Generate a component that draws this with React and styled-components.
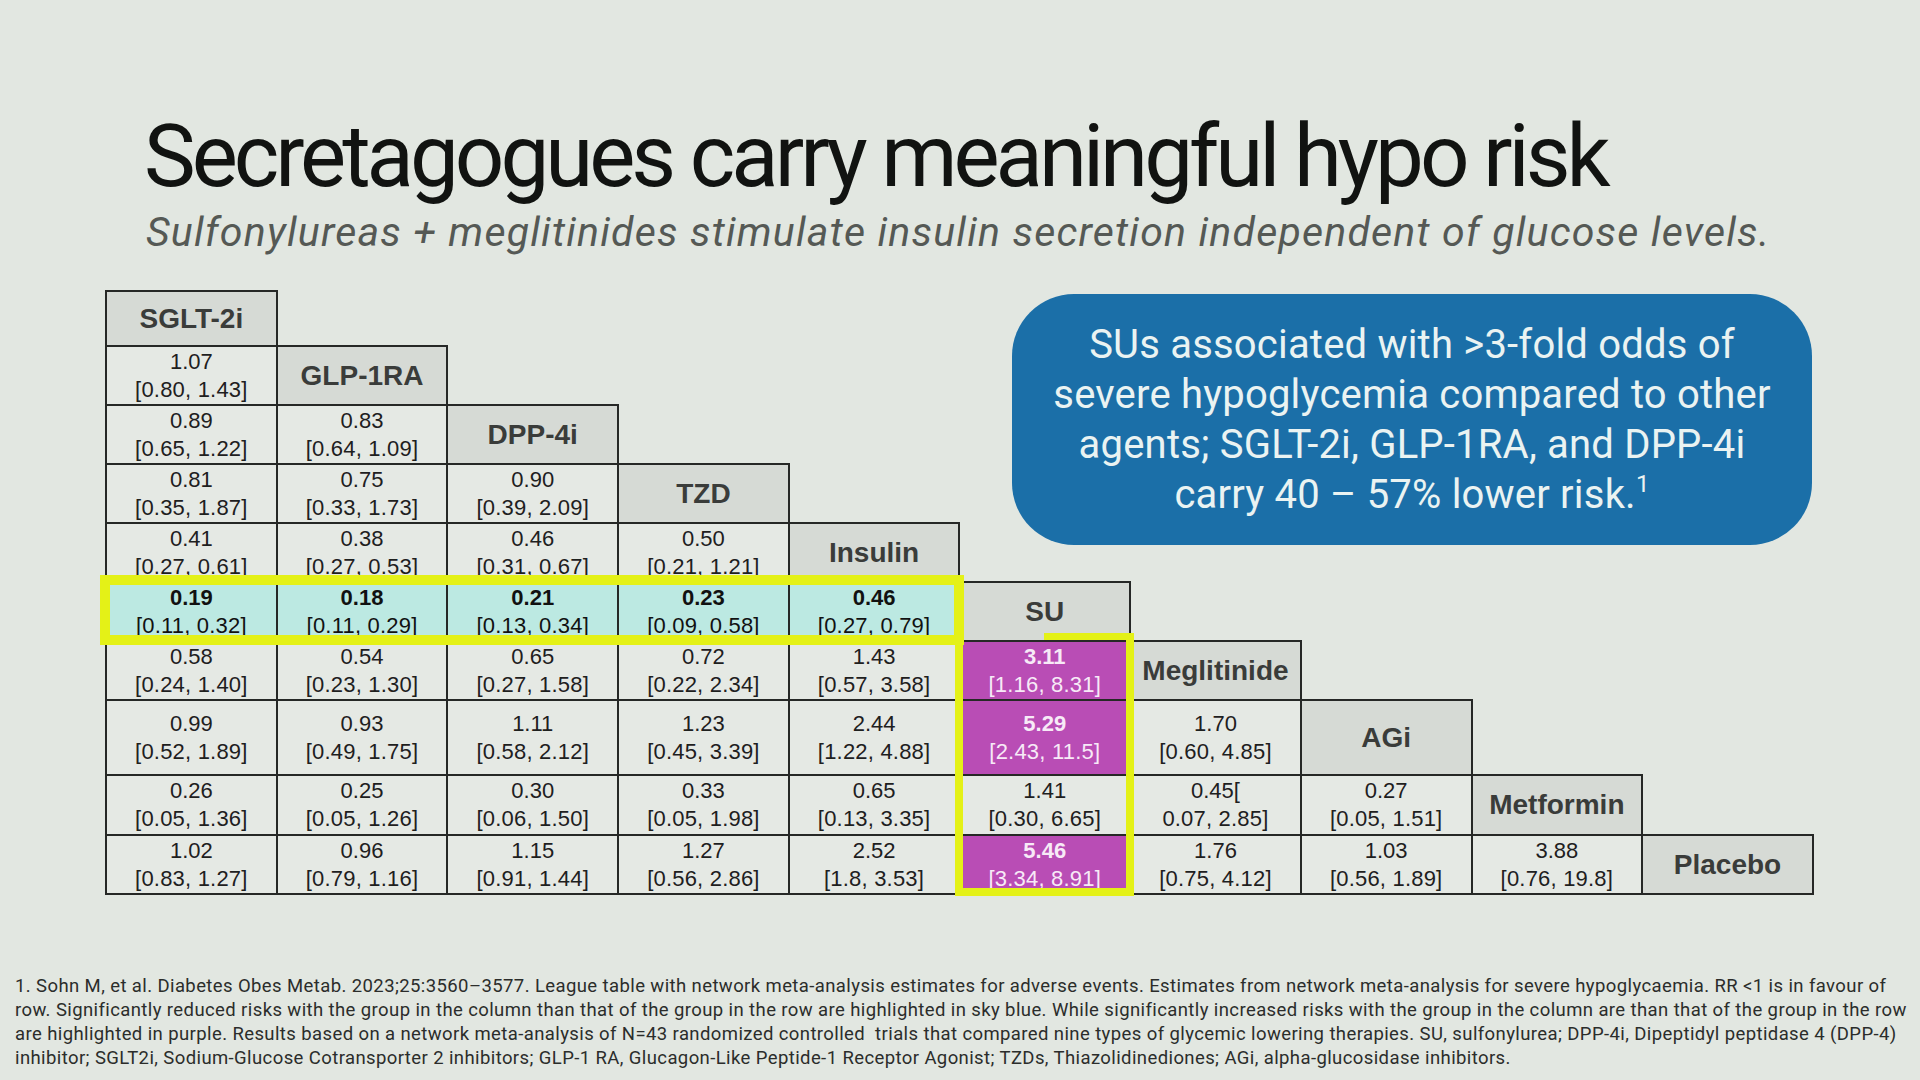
import React from 'react';
import styled, { createGlobalStyle } from 'styled-components';

const GlobalStyle = createGlobalStyle`
  html, body {
    margin: 0;
    padding: 0;
  }
  body {
    background: #e2e7e1;
    font-family: Roboto, "Liberation Sans", sans-serif;
  }
`;

const Slide = styled.div`
  width: 1920px;
  height: 1080px;
  overflow: hidden;
  box-sizing: border-box;
  padding-top: 113px;
  display: flex;
  flex-direction: column;
`;

const Title = styled.h1`
  margin: 0 0 0 144px;
  font: 400 87px/1 Roboto, sans-serif;
  letter-spacing: -4px;
  color: #111311;
  white-space: nowrap;
`;

const Subtitle = styled.p`
  margin: 12px 0 0 146px;
  font: italic 400 41px/1 Roboto, sans-serif;
  letter-spacing: 1.2px;
  color: #555955;
  white-space: nowrap;
`;

const Board = styled.div`
  position: relative;
  margin: 37px 0 0 105px;
  width: 1707px;
`;

const League = styled.table`
  border-collapse: collapse;
  table-layout: fixed;
  width: 1707px;
  font-family: "Liberation Sans", Arial, sans-serif;
`;

const Row = styled.tr`
  height: ${p => p.$h}px;
`;

const tones = {
  plain: { bg: '#e5e9e4', fg: '#1e201e' },
  blue: { bg: '#bce9e2', fg: '#111' },
  purple: { bg: '#b94db5', fg: '#f7eaf7' },
};

const Cell = styled.td`
  padding: 0;
  text-align: center;
  vertical-align: middle;
  border: 2px solid #262826;
  background: ${p => tones[p.$tone].bg};
  color: ${p => tones[p.$tone].fg};
  font-size: 22px;
  line-height: 28px;
`;

const Value = styled.div`
  font-weight: ${p => (p.$bold ? 700 : 400)};
`;

const Range = styled.div`
  white-space: nowrap;
  letter-spacing: 0.2px;
`;

const HeadCell = styled.td`
  padding: 0;
  text-align: center;
  vertical-align: middle;
  border: 2px solid #262826;
  background: #d6dad5;
  color: #3a3c3a;
  font-size: 28px;
  font-weight: 700;
`;

const Blank = styled.td`
  border: none;
  padding: 0;
`;

const Frame = styled.div`
  position: absolute;
  box-sizing: border-box;
  pointer-events: none;
  border: 10px solid #e4f117;
`;

const RowFrame = styled(Frame)`
  left: -5px;
  top: 285px;
  width: 864px;
  height: 70px;
`;

const ColFrame = styled(Frame)`
  left: 850px;
  top: 343px;
  width: 179px;
  height: 263px;
  border-width: 0 8px 8px 8px;

  &::before {
    content: '';
    position: absolute;
    top: 0;
    right: -8px;
    width: 90px;
    height: 7px;
    background: #e4f117;
  }
`;

const Callout = styled.div`
  position: absolute;
  top: 4px;
  right: 0;
  width: 800px;
  height: 251px;
  border-radius: 62px;
  background: #1b6fa8;
  color: #eaf3f2;
  display: flex;
  align-items: center;
  justify-content: center;
  text-align: center;
  font: 400 40px/50px Roboto, sans-serif;
  letter-spacing: 0.2px;

  sup {
    font-size: 24px;
    line-height: 0;
    vertical-align: 16px;
  }
`;

const Footnote = styled.div`
  margin: 79px 0 0 15px;
  font: 400 18.5px/24px Roboto, sans-serif;
  letter-spacing: 0.4px;
  color: #2b2d2b;
`;

const NoteLine = styled.div`
  white-space: pre;
`;

const drugs = ['SGLT-2i', 'GLP-1RA', 'DPP-4i', 'TZD', 'Insulin', 'SU', 'Meglitinide', 'AGi', 'Metformin', 'Placebo'];
const heights = [55, 59, 59, 59, 59, 59, 59, 75, 60, 59];

// [value, range, tone]
const rows = [
  [],
  [['1.07', '[0.80, 1.43]']],
  [['0.89', '[0.65, 1.22]'], ['0.83', '[0.64, 1.09]']],
  [['0.81', '[0.35, 1.87]'], ['0.75', '[0.33, 1.73]'], ['0.90', '[0.39, 2.09]']],
  [['0.41', '[0.27, 0.61]'], ['0.38', '[0.27, 0.53]'], ['0.46', '[0.31, 0.67]'], ['0.50', '[0.21, 1.21]']],
  [
    ['0.19', '[0.11, 0.32]', 'blue'], ['0.18', '[0.11, 0.29]', 'blue'], ['0.21', '[0.13, 0.34]', 'blue'],
    ['0.23', '[0.09, 0.58]', 'blue'], ['0.46', '[0.27, 0.79]', 'blue'],
  ],
  [
    ['0.58', '[0.24, 1.40]'], ['0.54', '[0.23, 1.30]'], ['0.65', '[0.27, 1.58]'], ['0.72', '[0.22, 2.34]'],
    ['1.43', '[0.57, 3.58]'], ['3.11', '[1.16, 8.31]', 'purple'],
  ],
  [
    ['0.99', '[0.52, 1.89]'], ['0.93', '[0.49, 1.75]'], ['1.11', '[0.58, 2.12]'], ['1.23', '[0.45, 3.39]'],
    ['2.44', '[1.22, 4.88]'], ['5.29', '[2.43, 11.5]', 'purple'], ['1.70', '[0.60, 4.85]'],
  ],
  [
    ['0.26', '[0.05, 1.36]'], ['0.25', '[0.05, 1.26]'], ['0.30', '[0.06, 1.50]'], ['0.33', '[0.05, 1.98]'],
    ['0.65', '[0.13, 3.35]'], ['1.41', '[0.30, 6.65]'], ['0.45[', '0.07, 2.85]'], ['0.27', '[0.05, 1.51]'],
  ],
  [
    ['1.02', '[0.83, 1.27]'], ['0.96', '[0.79, 1.16]'], ['1.15', '[0.91, 1.44]'], ['1.27', '[0.56, 2.86]'],
    ['2.52', '[1.8, 3.53]'], ['5.46', '[3.34, 8.91]', 'purple'], ['1.76', '[0.75, 4.12]'], ['1.03', '[0.56, 1.89]'],
    ['3.88', '[0.76, 19.8]'],
  ],
];

const notes = [
  '1. Sohn M, et al. Diabetes Obes Metab. 2023;25:3560–3577. League table with network meta-analysis estimates for adverse events. Estimates from network meta-analysis for severe hypoglycaemia. RR <1 is in favour of',
  'row. Significantly reduced risks with the group in the column than that of the group in the row are highlighted in sky blue. While significantly increased risks with the group in the column are than that of the group in the row',
  'are highlighted in purple. Results based on a network meta-analysis of N=43 randomized controlled  trials that compared nine types of glycemic lowering therapies. SU, sulfonylurea; DPP-4i, Dipeptidyl peptidase 4 (DPP-4)',
  'inhibitor; SGLT2i, Sodium-Glucose Cotransporter 2 inhibitors; GLP-1 RA, Glucagon-Like Peptide-1 Receptor Agonist; TZDs, Thiazolidinediones; AGi, alpha-glucosidase inhibitors.',
];

function LeagueTable() {
  return (
    <League>
      <colgroup>
        {drugs.map(d => <col key={d} style={{ width: 170.7 }} />)}
      </colgroup>
      <tbody>
        {rows.map((cells, r) => (
          <Row key={r} $h={heights[r]}>
            {cells.map(([v, ci, tone = 'plain'], c) => (
              <Cell key={c} $tone={tone}>
                <Value $bold={tone !== 'plain'}>{v}</Value>
                <Range>{ci}</Range>
              </Cell>
            ))}
            <HeadCell>{drugs[r]}</HeadCell>
            {drugs.slice(r + 1).map(d => <Blank key={d} />)}
          </Row>
        ))}
      </tbody>
    </League>
  );
}

export default function App() {
  return (
    <Slide>
      <GlobalStyle />
      <Title>Secretagogues carry meaningful hypo risk</Title>
      <Subtitle>Sulfonylureas + meglitinides stimulate insulin secretion independent of glucose levels.</Subtitle>
      <Board>
        <LeagueTable />
        <RowFrame />
        <ColFrame />
        <Callout>
          <div>
            SUs associated with &gt;3-fold odds of<br />
            severe hypoglycemia compared to other<br />
            agents; SGLT-2i, GLP-1RA, and DPP-4i<br />
            carry 40 – 57% lower risk.<sup>1</sup>
          </div>
        </Callout>
      </Board>
      <Footnote>
        {notes.map((n, i) => <NoteLine key={i}>{n}</NoteLine>)}
      </Footnote>
    </Slide>
  );
}
